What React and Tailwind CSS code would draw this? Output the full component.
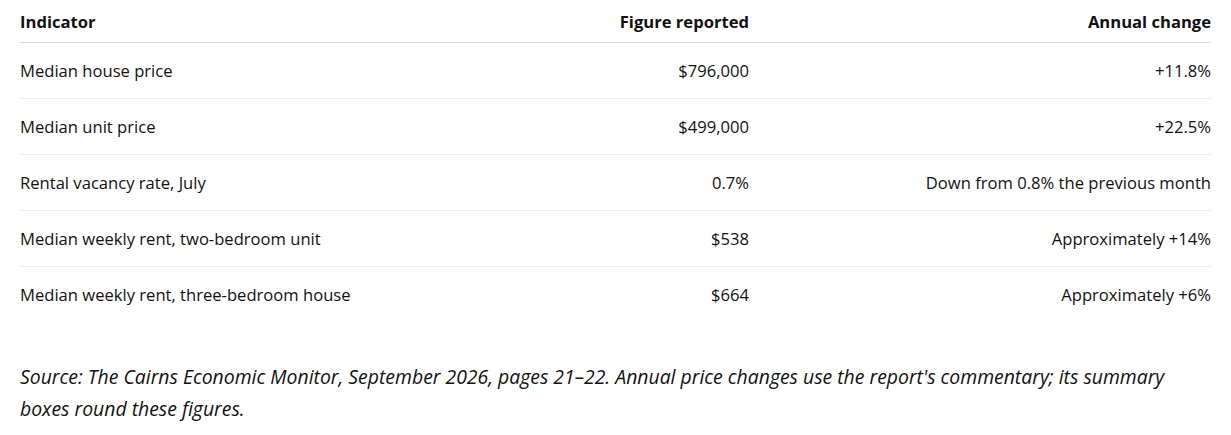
import React from 'react';

const rows = [
  ['Median house price', '$796,000', '+11.8%'],
  ['Median unit price', '$499,000', '+22.5%'],
  ['Rental vacancy rate, July', '0.7%', 'Down from 0.8% the previous month'],
  ['Median weekly rent, two-bedroom unit', '$538', 'Approximately +14%'],
  ['Median weekly rent, three-bedroom house', '$664', 'Approximately +6%'],
];

export default function App() {
  return (
    <div className="min-h-screen bg-white px-5 text-[#111] font-['Open_Sans',sans-serif]">
      <table className="w-full border-collapse text-[16.6px] leading-6">
        <thead>
          <tr className="border-b border-[#d9d9d9]">
            <th className="pt-[10px] pb-2 text-left font-bold w-[560px]">Indicator</th>
            <th className="pt-[10px] pb-2 text-right font-bold">Figure reported</th>
            <th className="pt-[10px] pb-2 text-right font-bold w-[462px]">Annual change</th>
          </tr>
        </thead>
        <tbody>
          {rows.map((r, i) => (
            <tr key={r[0]} className={i < rows.length - 1 ? 'border-b border-[#ececec]' : ''}>
              <td className="pt-4 pb-[15px] text-left">{r[0]}</td>
              <td className="pt-4 pb-[15px] text-right">{r[1]}</td>
              <td className="pt-4 pb-[15px] text-right">{r[2]}</td>
            </tr>
          ))}
        </tbody>
      </table>
      <p className="mt-[39px] text-[19.4px] leading-8 italic">
        Source: The Cairns Economic Monitor, September 2026, pages 21–22. Annual price changes use the report's commentary; its summary
        <br />
        boxes round these figures.
      </p>
    </div>
  );
}
